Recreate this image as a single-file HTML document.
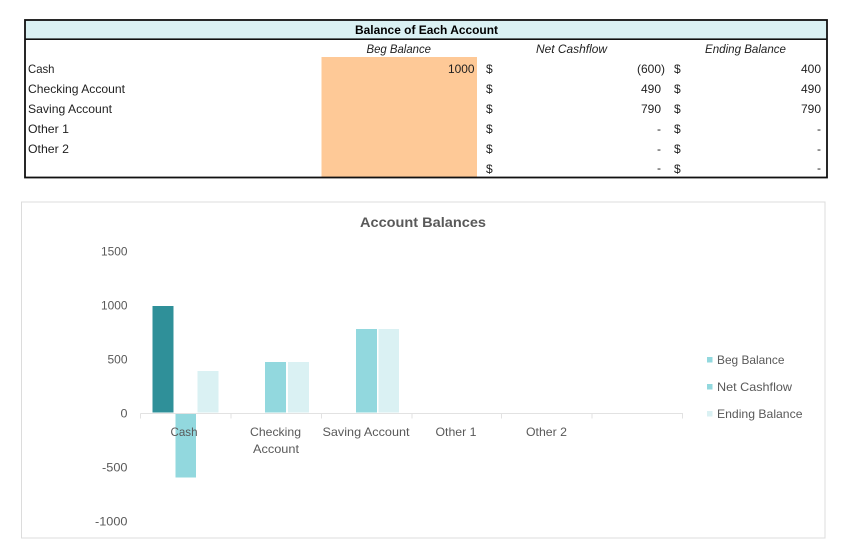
<!DOCTYPE html>
<html>
<head>
<meta charset="utf-8">
<style>
html,body{margin:0;padding:0;background:#fff;width:850px;height:549px;overflow:hidden}
svg{display:block}
text{font-family:"Liberation Sans",sans-serif;font-size:12px}
.c{fill:#1f1f1f}
.g{fill:#595959}
.i{font-style:italic}
</style>
</head>
<body>
<svg width="850" height="549" viewBox="0 0 850 549" xmlns="http://www.w3.org/2000/svg">
<rect x="0" y="0" width="850" height="549" fill="#fff"/>
<!-- table -->
<rect x="25" y="20.5" width="802" height="18" fill="#daf1f3"/>
<rect x="321.5" y="57" width="155.5" height="120" fill="#fec997"/>
<rect x="25" y="20" width="802" height="157.5" fill="none" stroke="#111" stroke-width="1.8"/>
<rect x="25" y="38.4" width="802" height="1.6" fill="#111"/>
<text x="355" y="34" font-weight="700" textLength="143" lengthAdjust="spacingAndGlyphs" fill="#000">Balance of Each Account</text>
<text x="366.5" y="53" class="c i" textLength="64.5" lengthAdjust="spacingAndGlyphs">Beg Balance</text>
<text x="536" y="53" class="c i" textLength="71" lengthAdjust="spacingAndGlyphs">Net Cashflow</text>
<text x="705" y="53" class="c i" textLength="81" lengthAdjust="spacingAndGlyphs">Ending Balance</text>

<text x="28" y="73" class="c" textLength="26.5" lengthAdjust="spacingAndGlyphs">Cash</text>
<text x="28" y="93" class="c" textLength="97" lengthAdjust="spacingAndGlyphs">Checking Account</text>
<text x="28" y="113" class="c" textLength="84" lengthAdjust="spacingAndGlyphs">Saving Account</text>
<text x="28" y="133" class="c" textLength="41" lengthAdjust="spacingAndGlyphs">Other 1</text>
<text x="28" y="153" class="c" textLength="41" lengthAdjust="spacingAndGlyphs">Other 2</text>

<text x="448" y="73" class="c" textLength="26.5" lengthAdjust="spacingAndGlyphs">1000</text>

<text x="486" y="73" class="c">$</text>
<text x="486" y="93" class="c">$</text>
<text x="486" y="113" class="c">$</text>
<text x="486" y="133" class="c">$</text>
<text x="486" y="153" class="c">$</text>
<text x="486" y="173" class="c">$</text>

<text x="637" y="73" class="c" textLength="28" lengthAdjust="spacingAndGlyphs">(600)</text>
<text x="641" y="93" class="c" textLength="20" lengthAdjust="spacingAndGlyphs">490</text>
<text x="641" y="113" class="c" textLength="20" lengthAdjust="spacingAndGlyphs">790</text>
<text x="657" y="133" class="c">-</text>
<text x="657" y="153" class="c">-</text>
<text x="657" y="172" class="c">-</text>

<text x="674" y="73" class="c">$</text>
<text x="674" y="93" class="c">$</text>
<text x="674" y="113" class="c">$</text>
<text x="674" y="133" class="c">$</text>
<text x="674" y="153" class="c">$</text>
<text x="674" y="173" class="c">$</text>

<text x="801" y="73" class="c" textLength="20" lengthAdjust="spacingAndGlyphs">400</text>
<text x="801" y="93" class="c" textLength="20" lengthAdjust="spacingAndGlyphs">490</text>
<text x="801" y="113" class="c" textLength="20" lengthAdjust="spacingAndGlyphs">790</text>
<text x="817" y="133" class="c">-</text>
<text x="817" y="153" class="c">-</text>
<text x="817" y="172" class="c">-</text>

<!-- chart frame -->
<rect x="21.5" y="202" width="803.5" height="336" fill="#fff" stroke="#dcdcdc" stroke-width="1"/>
<text x="423" y="227" text-anchor="middle" font-weight="700" style="font-size:14px" fill="#595959" textLength="126" lengthAdjust="spacingAndGlyphs">Account Balances</text>

<!-- y axis labels -->
<text x="101" y="255.5" class="g" textLength="26.5" lengthAdjust="spacingAndGlyphs">1500</text>
<text x="101" y="309.5" class="g" textLength="26.5" lengthAdjust="spacingAndGlyphs">1000</text>
<text x="107.5" y="363.5" class="g" textLength="20" lengthAdjust="spacingAndGlyphs">500</text>
<text x="120.5" y="417.5" class="g" textLength="7" lengthAdjust="spacingAndGlyphs">0</text>
<text x="102" y="471.5" class="g" textLength="25.5" lengthAdjust="spacingAndGlyphs">-500</text>
<text x="95" y="525.5" class="g" textLength="32.5" lengthAdjust="spacingAndGlyphs">-1000</text>

<!-- bars -->
<rect x="152.5" y="306" width="21" height="106.5" fill="#2f9099"/>
<rect x="175.5" y="414" width="20.5" height="63.5" fill="#92d8de"/>
<rect x="197.5" y="371" width="21" height="41.5" fill="#daf1f3"/>
<rect x="265" y="362" width="21" height="50.5" fill="#92d8de"/>
<rect x="288" y="362" width="21" height="50.5" fill="#daf1f3"/>
<rect x="356" y="329" width="21" height="83.5" fill="#92d8de"/>
<rect x="378.5" y="329" width="20.5" height="83.5" fill="#daf1f3"/>

<!-- axis -->
<path d="M140.5 413.5H683M140.5 413.5v5M231 413.5v5M321.5 413.5v5M412 413.5v5M501.5 413.5v5M592 413.5v5M682.5 413.5v5" stroke="#e2e2e2" stroke-width="1" fill="none"/>

<!-- category labels -->
<text x="170.5" y="436" class="g" textLength="27" lengthAdjust="spacingAndGlyphs">Cash</text>
<text x="250" y="436" class="g" textLength="51" lengthAdjust="spacingAndGlyphs">Checking</text>
<text x="253" y="453" class="g" textLength="46" lengthAdjust="spacingAndGlyphs">Account</text>
<text x="322.5" y="436" class="g" textLength="87" lengthAdjust="spacingAndGlyphs">Saving Account</text>
<text x="435.5" y="436" class="g" textLength="41" lengthAdjust="spacingAndGlyphs">Other 1</text>
<text x="526" y="436" class="g" textLength="41" lengthAdjust="spacingAndGlyphs">Other 2</text>

<!-- legend -->
<rect x="707" y="357" width="5.5" height="5.5" fill="#92d8de"/>
<rect x="707" y="384" width="5.5" height="5.5" fill="#92d8de"/>
<rect x="707" y="411" width="5.5" height="5.5" fill="#daf1f3"/>
<text x="717" y="364" class="g" textLength="67.5" lengthAdjust="spacingAndGlyphs">Beg Balance</text>
<text x="717" y="391" class="g" textLength="75" lengthAdjust="spacingAndGlyphs">Net Cashflow</text>
<text x="717" y="418" class="g" textLength="85.5" lengthAdjust="spacingAndGlyphs">Ending Balance</text>
</svg>
</body>
</html>
